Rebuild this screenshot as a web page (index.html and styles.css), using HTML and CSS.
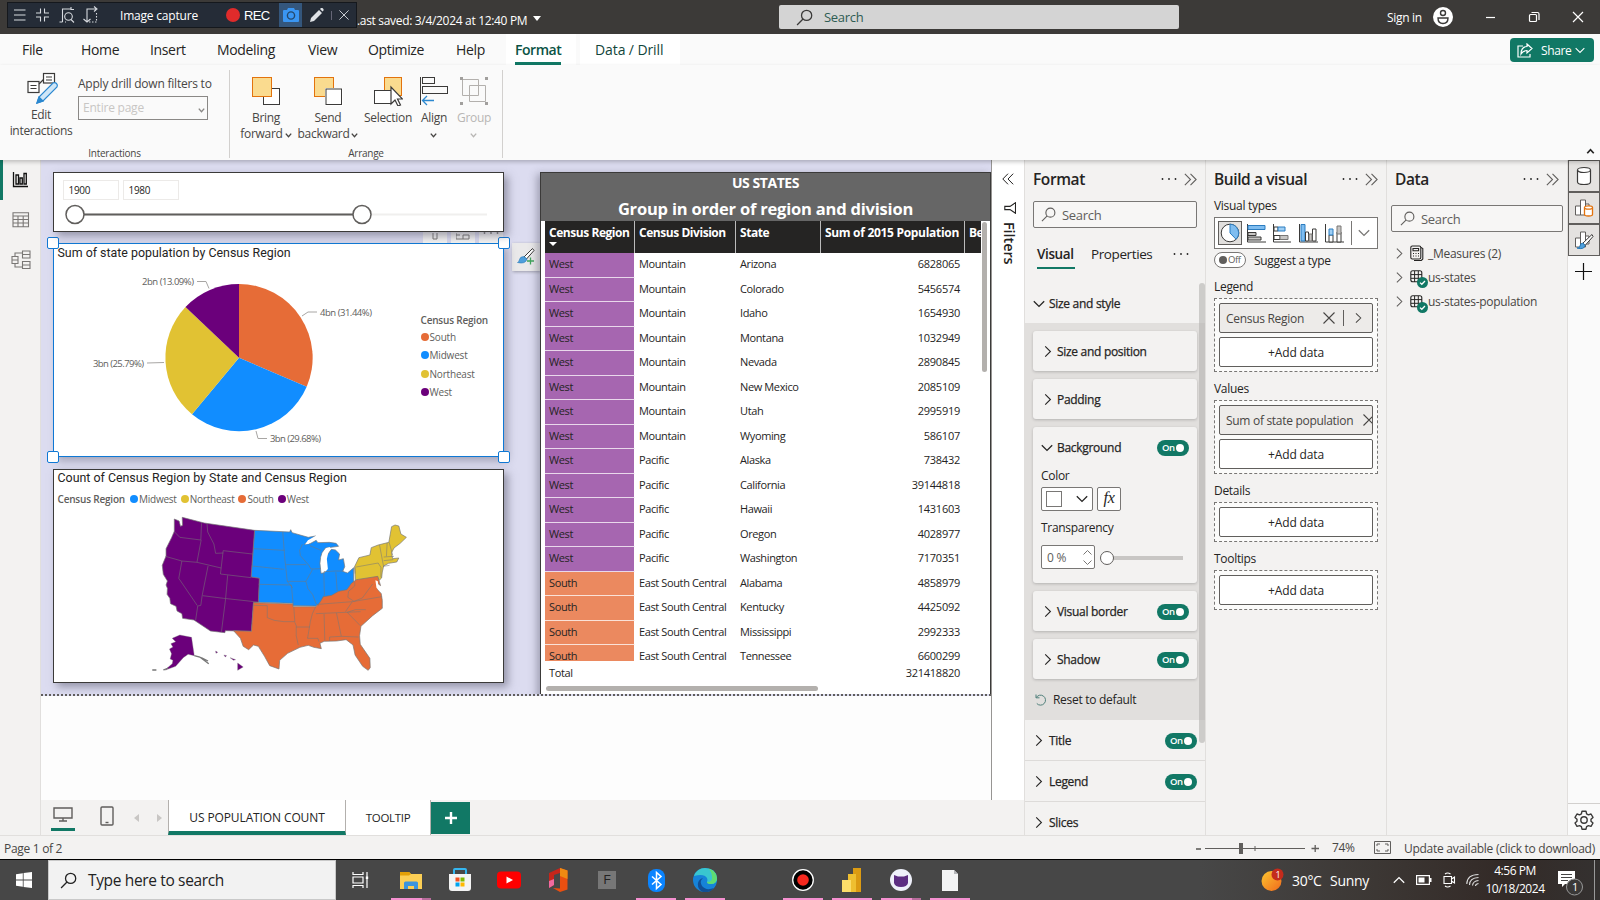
FILE: index.html
```html
<!DOCTYPE html>
<html lang="en">
<head>
<meta charset="utf-8">
<title>US Population Report</title>
<link rel="stylesheet" href="styles.css">
</head>
<body>
<svg class="defs" width="0" height="0">
  <defs>
    <symbol id="search" viewBox="0 0 16 16"><circle cx="10" cy="6" r="4.8" fill="none" stroke="currentColor" stroke-width="1.2"/><path d="M6.6 9.4 1 15" stroke="currentColor" stroke-width="1.2" fill="none"/></symbol>
    <symbol id="right" viewBox="0 0 8 14"><path d="M1 1.5 6.6 7 1 12.500" fill="none" stroke="currentColor" stroke-width="1.2"/></symbol>
    <symbol id="down" viewBox="0 0 12 8"><path d="M.8 1.200 6 6.400 11.200 1.200" fill="none" stroke="currentColor" stroke-width="1.3"/></symbol>
    <symbol id="sdown" viewBox="0 0 7 5"><path d="M.8.600 3.500 3.600 6.200.6" fill="none" stroke="currentColor" stroke-width="1.4"/></symbol>
    <symbol id="dbl" viewBox="0 0 12 12"><path d="M.8.7 6 6 .8 11.300M6 .7 11.200 6 6 11.300" fill="none" stroke="currentColor"/></symbol>
    <symbol id="dots" viewBox="0 0 16 4"><circle cx="1.500" cy="2" r=".9" fill="currentColor"/><circle cx="8" cy="2" r=".9" fill="currentColor"/><circle cx="14.500" cy="2" r=".9" fill="currentColor"/></symbol>
    <symbol id="cross" viewBox="0 0 12 12"><path d="M.5.5 11.500 11.500M11.500.5.5 11.500" stroke="currentColor" fill="none" stroke-width="1.1"/></symbol>
    <symbol id="table" viewBox="0 0 18 18"><rect x=".8" y=".8" width="11" height="11" rx="2" fill="none" stroke="#252423" stroke-width="1.1"/><path d="M4.600 1v11M8.300 1v11M1 4.600h11M1 8.300h11" stroke="#252423" stroke-width="1"/><circle cx="12.500" cy="12.500" r="5.500" fill="#117865"/><path d="m10 12.600 1.800 1.700 3.200-3.300" stroke="#fff" stroke-width="1.300" fill="none"/></symbol>
  </defs>
</svg>
<div class="app">
  <header class="titlebar">
    <div class="recorder">
      <svg width="90" height="24" viewBox="0 0 90 24" fill="none" stroke="#d8dbe0" stroke-width="1.100"><path d="M6 7h11.500M6 12h11.500M6 17h11.500"/><path d="M28 10h4.500V5.500M36.500 5.500V10H41M28 14h4.500v4.500M36.500 18.500V14H41"/><path d="M54.500 19V6h8M51.500 19h3M63 4v2.500h3M57 19h1"/><circle cx="60.500" cy="13.500" r="3.800"/><path d="M63 16.500l3 3"/><path d="M79 19V6h9M75.500 16l3.500 3 3.500-3M86 3.500 89 6l-3 2.500"/><path d="M88.500 10v9M81 19h8" stroke-dasharray="1.500 1.500"/></svg>
      <span class="rec-title">Image capture</span>
      <i class="rec-dot"></i><span class="rec-text">REC</span>
      <span class="rec-cam"><svg width="16" height="14" viewBox="0 0 16 14"><path d="M1 2h3l1-2h6l1 2h3q1 0 1 1v10q0 1-1 1H1q-1 0-1-1V3q0-1 1-1z" fill="#3a96f3"/><circle cx="8" cy="7.500" r="3.600" fill="none" stroke="#24486c" stroke-width="1.400"/></svg></span>
      <svg class="rec-pen" width="14" height="14" viewBox="0 0 14 14"><path d="M0 14l1-4 8-8 3 3-8 8zM10 1l1-1q1-.5 2 .5t.5 2l-1 1z" fill="#dfe2e6"/></svg>
      <i class="rec-sep"></i>
      <svg width="10" height="10" class="rec-x"><use href="#cross"/></svg>
    </div>
    <span class="saved">.ast saved: 3/4/2024 at 12:40 PM</span>
    <i class="caret"></i>
    <div class="topsearch"><svg width="17" height="17"><use href="#search"/></svg><span>Search</span></div>
    <span class="signin">Sign in</span>
    <svg class="avatar" width="20" height="20" viewBox="0 0 20 20"><circle cx="10" cy="10" r="10" fill="#fff"/><circle cx="10" cy="6" r="2.500" fill="none" stroke="#3b3a39" stroke-width="1.400"/><path d="M5 11h10q0 5.500-5 5.500T5 11z" fill="none" stroke="#3b3a39" stroke-width="1.400"/></svg>
    <svg class="winctl" width="100" height="12" viewBox="0 0 100 12" fill="none" stroke="#fff" stroke-width="1.200"><path d="M0 6.500h9"/><rect x="43.500" y="3.500" width="7" height="7" rx="1"/><path d="M45.500 1.500h6q1.500 0 1.500 1.500v6"/><path d="m87 1 10 10M97 1 87 11"/></svg>
  </header>

  <nav class="tabs">
    <span class="tab t1">File</span><span class="tab t2">Home</span><span class="tab t3">Insert</span><span class="tab t4">Modeling</span><span class="tab t5">View</span><span class="tab t6">Optimize</span><span class="tab t7">Help</span><span class="tab ctx active">Format</span><span class="tab ctx">Data / Drill</span>
    <span class="share"><svg width="16" height="15" viewBox="0 0 16 15" fill="none" stroke="#fff" stroke-width="1.200"><path d="M6 3H1v11h12v-3"/><path d="M10 1l5 4.500-5 4.500V7.500Q6 7.500 4 11q0-7 6-7.500z"/></svg><span>Share</span><svg width="10" height="7"><use href="#down"/></svg></span>
  </nav>

  <section class="ribbon">
    <div class="group interactions">
      <div class="gbody">
        <div class="cmd edit"><svg width="32" height="34" viewBox="0 0 32 34" fill="none" stroke="#3b3a39" stroke-width="1.200"><path d="M12 12l5-5"/><rect x="16.500" y="1.500" width="11" height="9.500" fill="#fff"/><path d="M19 5h6M19 8h6"/><rect x="1" y="9.500" width="11" height="11" fill="#fff"/><path d="M3.500 13.500h6M3.500 16.500h6"/><path d="M10 31l2-6L26 11q2-1 3.500.5T30 15L16 29z" fill="#cfe6f7" stroke="#2b88d0"/><path d="M10 31l2-6 4 4z" fill="#2b88d0" stroke="#2b88d0"/></svg><span>Edit<br>interactions</span></div>
        <div class="drill"><span>Apply drill down filters to</span><div class="select"><span>Entire page</span><svg width="7" height="5"><use href="#sdown"/></svg></div></div>
      </div>
      <div class="glabel">Interactions</div>
    </div>
    <div class="group arrange">
      <div class="gbody">
        <div class="cmd w60"><svg width="30" height="30" viewBox="0 0 30 30"><rect x="12.500" y="12.500" width="16" height="16" fill="#fff" stroke="#3b3a39"/><path d="M1 1h20v20H1z" fill="#fff"/><rect x="1.500" y="1.500" width="19" height="19" fill="#fadb8f" stroke="#e3730d"/></svg><span>Bring<br>forward<svg width="7" height="5"><use href="#sdown"/></svg></span></div>
        <div class="cmd w64"><svg width="30" height="30" viewBox="0 0 30 30"><rect x="1.500" y="1.500" width="19" height="19" fill="#fadb8f" stroke="#e3730d"/><rect x="12" y="12" width="18" height="18" fill="#fff"/><rect x="13" y="13" width="15.500" height="15.500" fill="#fff" stroke="#3b3a39"/></svg><span>Send<br>backward<svg width="7" height="5"><use href="#sdown"/></svg></span></div>
        <div class="cmd w56"><svg width="30" height="30" viewBox="0 0 30 30"><rect x="11.500" y="1.500" width="17" height="18" fill="#fadb8f" stroke="#e3730d"/><rect x="1.500" y="14.500" width="17" height="13" fill="#fff" stroke="#3b3a39"/><path d="M18 11v17l4-4 3 6 2.500-1-3-6h5z" fill="#fff" stroke="#3b3a39" stroke-width="1.200"/></svg><span>Selection</span></div>
        <div class="cmd w36"><svg width="30" height="30" viewBox="0 0 30 30" fill="none" stroke="#3b3a39"><path d="M1.500 1v28"/><rect x="3.500" y="1.500" width="12" height="6"/><rect x="3.500" y="10.500" width="25" height="7"/><path d="M15 24.500H4M8 20l-4.500 4.500L8 29" stroke="#2b88d0" stroke-width="1.300"/></svg><span>Align<br><svg class="solo" width="7" height="5"><use href="#sdown"/></svg></span></div>
        <div class="cmd w44 off"><svg width="30" height="30" viewBox="0 0 30 30" fill="none" stroke="#b3b0ad"><path d="M3.500 3.500h16v16h-16zM10.500 9.500h16v16h-16z"/><path d="M1 1h3v3H1zM26 1h3v3h-3zM1 26h3v3H1zM26 26h3v3h-3z" fill="#a19f9d" stroke="none"/></svg><span>Group<br><svg class="solo" width="7" height="5"><use href="#sdown"/></svg></span></div>
      </div>
      <div class="glabel">Arrange</div>
    </div>
    <svg class="collapse" width="9" height="6"><use href="#sdown"/></svg>
  </section>

  <main class="work">
    <aside class="views">
      <i class="mark"></i>
      <svg width="16" height="16" viewBox="0 0 16 16" fill="none" stroke="#111" stroke-width="1.300"><path d="M1.500 0v14.500H16M4 3h2.500v9H4zM8 6h2.300v6H8zM12 1.500h2.300V12H12z"/></svg>
      <svg width="18" height="16" viewBox="0 0 18 16" fill="none" stroke="#797775" stroke-width="1.100"><path d="M1 .7h15.500v14H1zM1 4h15.500M1 7.500h15.500M1 11h15.500M6 4v10.700M11.200 4v10.700"/></svg>
      <svg width="20" height="20" viewBox="0 0 20 20" fill="none" stroke="#797775" stroke-width="1.100"><path d="M1 6.500h6v7H1zM1 10h6M11.500 1H19v7h-7.500zM11.500 4.500H19M11.500 11.500H19v7h-7.500zM11.500 15H19M4 6.500V3h7.500M4 13.500V17h7.500"/></svg>
    </aside>

    <div class="canvas">
      <div class="page">
        <div class="leftcol">
          <section class="card slicer">
            <div class="years"><span>1900</span><span>1980</span></div>
            <svg width="440" height="22" viewBox="0 0 440 22"><path d="M20 10.500h413" stroke="#f0efee" stroke-width="2"/><path d="M20 10.500h287" stroke="#605e5c" stroke-width="2"/><circle cx="21" cy="10.500" r="9" fill="#fff" stroke="#605e5c" stroke-width="1.500"/><circle cx="308" cy="10.500" r="9" fill="#fff" stroke="#605e5c" stroke-width="1.500"/></svg>
          </section>
          <section class="card piecard">
            <div class="vtools"><span><svg width="10" height="8" viewBox="0 0 10 8"><path d="M3 0v6h4V0" fill="none" stroke="#797775"/></svg></span><span><svg width="14" height="8" viewBox="0 0 14 8"><path d="M0 0v6h13V2H7v4M0 2h4" fill="none" stroke="#797775"/></svg></span><span class="dim"><svg width="16" height="4"><use href="#dots"/></svg></span></div>
            <i class="h tl"></i><i class="h tr"></i><i class="h bl"></i><i class="h br"></i>
            <h3>Sum of state population by Census Region</h3>
            <div class="pierow">
            <svg class="pie" width="350" height="190" viewBox="54 262 350 190">
              <path d="M239 357.700V284a73.700 73.700 0 0 1 67.700 102.700z" fill="#e66c37"/>
              <path d="M239 357.700 306.700 386.700A73.700 73.700 0 0 1 192 414.300z" fill="#118dff"/>
              <path d="M239 357.700 192 414.300A73.700 73.700 0 0 1 185.500 307z" fill="#e1c233"/>
              <path d="M239 357.700 185.500 307A73.700 73.700 0 0 1 239 284z" fill="#6b007b"/>
              <g fill="none" stroke="#a8a6a4"><path d="M197 281.500h9l3 7M302 316l6-4h9M147 363l17-.5M256 431l2 7.500h9"/></g>
              <g class="plabel"><text x="142" y="284.500" textLength="52">2bn (13.09%)</text><text x="320" y="316" textLength="52">4bn (31.44%)</text><text x="93" y="366.500" textLength="51">3bn (25.79%)</text><text x="270" y="441.500" textLength="51">3bn (29.68%)</text></g>
            </svg>
            <ul class="legend col"><li class="lt">Census Region</li><li class="south">South</li><li class="mid">Midwest</li><li class="ne">Northeast</li><li class="west">West</li></ul>
            </div>
          </section>
          <section class="card mapcard">
            <h3>Count of Census Region by State and Census Region</h3>
            <ul class="legend row"><li class="lt">Census Region</li><li class="mid">Midwest</li><li class="ne">Northeast</li><li class="south">South</li><li class="west">West</li></ul>
            <svg class="map" width="268.600" height="160" viewBox="420 160 780 480" preserveAspectRatio="none">
              <g stroke="#777" stroke-width="2" stroke-linejoin="round">
                <path fill="#118dff" d="M741 212l102 5 3-7 4 9 47 14 21-4-32 25 16-2 18-10 5 7 33-1 20 3 7 9-38 5-10 14-4 14-2 18 3 30 10-2 4-28 2-22 14-20 12 2 12 12-3 18 14-4 4 24-6 14 14 5 18-16v49l-17 24-23 19-42 7L919 439 853 438 852 431 752 428 755 356 731 352z"/>
                <path fill="#6b007b" d="M508 178l14 6 4 16 6-3-1-24 64 17 146 22-10 140 24 4-3 72-14 1-6 86-76-2-1 6-42-5-48-33-33-5-2-14-14-8-3-14-16-8-2-16-8-12 1-18-4-10 4-12-12-20-3-27 11-28v-22l16-33 8-19z"/>
                <path fill="#e1c233" d="M1032 320l12-26 32-8 4-22 20-8 31-8 8-47 10-5 11 3 6 24 16 10-18 18-18 14-7 14 3 18 18-2-6 12-24 4-14 8-4 18-2 18-6 6-8-6-62 10z"/>
                <path fill="#e66c37" d="M738 429l114 4 1 8 66 0 10-10 12-20 24-4 20-12 24-5 14-20 14-10 62-10 8 28-10-8 2 20 10 12 3 20 0 24-28 22-34 32-4 28 2 26 28 42 1 28-6 8-16-12-22-34-6-30-20-16-28 4-36 1-12 6 4 16-22-4-16-6-24 6L837 581 814 602 812 628 785 618 770 590 752 560 738 556 724 570 708 560 700 536 680 513 732 515z"/>
              </g>
              <path fill="#fff" d="M937 285l12-20 12-3-5 12-5 24 3 30-8 9-10-8-2-20zM888 254l8-12 22-13 6 3-22 12-4 9zM1092 362l7 3 2 18 6 15-12-14z"/>
              <g fill="none" stroke="#777" stroke-width="1.600">
                <path d="M508 216l16 17 61 8 2-50M586 241l-12 66M482 290l48 14 44 4 70 17M530 304l-9 52 54 82M606 319l-17 88-4 30-9 2-6 42M603 192l2 25 18 36 5 28 22-1M650 273l-8 70 89 11M650 273l85 10M663 347l-6 69M590 408l62 8 98 11M657 417l-12 99"/>
                <path d="M738 267l90 5M734 319l92 10M753 374l95 2 5 56M823 217l6 82 2 16h60M831 315l5 50 54 0 10-18 10-18M836 365l16 20M880 254l-8 18 2 16 24 28 7 12 28-1M890 365l6 22 14 18 10 28 8 4M902 258l32 14M942 338l2 68-8 10M942 336l34-2 24 0M977 338l4 56M1032 320l1 22"/>
                <path d="M738 437l40 1v36l20 8 28 4 32 0-3-45M858 488l4 10v30l6 28M862 502l40 0M919 440l-10 22-6 24-8 50 30 0 3 10M919 462l130-6M925 434l100-8 86-15M943 463l2 80M979 460l14 70-34 2v12M993 530l50 2M1010 458l38 40M1010 458l24-8 30 0M1025 426l-20 30M1032 365l0 14-18 16-2 18 18 12 24-10 30-42"/>
                <path d="M1104 256l8 44 4 22M1116 292l30-2M1116 303l28-3M1126 250l-2 40M1132 248l10 38M1036 322l64-12 8 13v30M1115 320l18-3"/>
              </g>
              <g fill="#6b007b" stroke="#777"><path d="M502 536l22-10 34 7 8 55-18-4-14 10-22 26-32 12 22-20 2-10-8-4 4-16-6-14 10-6-6-10 14-6z"/><path fill="none" stroke-width="4" d="M490 625l-14 6M456 631h-12M566 588l16 4 26 20M586 594l20 10"/><path d="M628 574l6 4-5 3zM652 586l8 2-4 4zM670 594l16 6-6 2zM692 610l16 12-16 10z"/></g>
            </svg>
          </section>
        </div>
        <span class="painter"><svg width="18" height="18" viewBox="0 0 18 18"><path d="M15.500.5 7 9l2.500 2L17 2.500z" fill="#fff" stroke="#3b3a39"/><path d="M7 8.500q-4 0-4.500 3Q2 14 .5 14.500q8 2 9.500-3.500z" fill="#4e9fdc" stroke="#2779b8" stroke-width=".6"/><path d="M13.500 9.500v7M10 13h7" stroke="#3fa45b" stroke-width="1.300"/></svg></span>
        <section class="card tablecard">
          <div class="thead1"><b>US STATES</b><strong>Group in order of region and division</strong></div>
          <div class="tbody">
            <div class="r hd"><span>Census Region<i></i></span><span>Census Division</span><span>State</span><span>Sum of 2015 Population</span><span>Be</span></div>
            <div class="rows">
            <div class="r w"><span>West</span><span>Mountain</span><span>Arizona</span><span>6828065</span></div>
            <div class="r w"><span>West</span><span>Mountain</span><span>Colorado</span><span>5456574</span></div>
            <div class="r w"><span>West</span><span>Mountain</span><span>Idaho</span><span>1654930</span></div>
            <div class="r w"><span>West</span><span>Mountain</span><span>Montana</span><span>1032949</span></div>
            <div class="r w"><span>West</span><span>Mountain</span><span>Nevada</span><span>2890845</span></div>
            <div class="r w"><span>West</span><span>Mountain</span><span>New Mexico</span><span>2085109</span></div>
            <div class="r w"><span>West</span><span>Mountain</span><span>Utah</span><span>2995919</span></div>
            <div class="r w"><span>West</span><span>Mountain</span><span>Wyoming</span><span>586107</span></div>
            <div class="r w"><span>West</span><span>Pacific</span><span>Alaska</span><span>738432</span></div>
            <div class="r w"><span>West</span><span>Pacific</span><span>California</span><span>39144818</span></div>
            <div class="r w"><span>West</span><span>Pacific</span><span>Hawaii</span><span>1431603</span></div>
            <div class="r w"><span>West</span><span>Pacific</span><span>Oregon</span><span>4028977</span></div>
            <div class="r w"><span>West</span><span>Pacific</span><span>Washington</span><span>7170351</span></div>
            <div class="r s"><span>South</span><span>East South Central</span><span>Alabama</span><span>4858979</span></div>
            <div class="r s"><span>South</span><span>East South Central</span><span>Kentucky</span><span>4425092</span></div>
            <div class="r s"><span>South</span><span>East South Central</span><span>Mississippi</span><span>2992333</span></div>
            <div class="r s"><span>South</span><span>East South Central</span><span>Tennessee</span><span>6600299</span></div>
            </div>
            <div class="r total"><span>Total</span><span></span><span></span><span>321418820</span></div>
            <i class="vs"></i><i class="hs"></i>
          </div>
        </section>
      </div>
      <div class="pagebar">
        <span class="dev on"><svg width="20" height="15" viewBox="0 0 20 15" fill="none" stroke="#605e5c" stroke-width="1.400"><path d="M1 1h18v10H1zM6 14h8M10 11v3"/></svg></span>
        <span class="dev ph"><svg width="14" height="20" viewBox="0 0 14 20" fill="none" stroke="#605e5c" stroke-width="1.400"><rect x="1" y="1" width="12" height="18" rx="1"/><path d="M5.500 16.500h3"/></svg></span>
        <i class="ar l"></i><i class="ar rr"></i>
        <span class="ptab on">US POPULATION COUNT</span><span class="ptab tip">TOOLTIP</span><span class="addp"><svg width="12" height="12"><path d="M6 0v12M0 6h12" stroke="#fff" stroke-width="2.400"/></svg></span>
      </div>
    </div>

    <aside class="filters"><svg width="12" height="12" class="flip"><use href="#dbl"/></svg><svg width="12" height="12" viewBox="0 0 12 12"><path d="M11.500.7v10.600L6 7.600H.8V4.400H6z" fill="none" stroke="#252423" stroke-width="1.100"/></svg><span>Filters</span></aside>

    <aside class="pane format">
      <div class="ptitle"><b>Format</b><svg width="16" height="4"><use href="#dots"/></svg><svg width="13" height="13"><use href="#dbl"/></svg></div>
      <div class="psearch"><svg width="15" height="15"><use href="#search"/></svg><span>Search</span></div>
      <div class="ptabs"><span class="on">Visual</span><span>Properties</span><svg width="16" height="4"><use href="#dots"/></svg></div>
      <div class="sec first"><svg width="12" height="8"><use href="#down"/></svg><span>Size and style</span></div>
      <div class="block">
        <div class="acc"><svg width="8" height="13"><use href="#right"/></svg><span>Size and position</span></div>
        <div class="acc"><svg width="8" height="13"><use href="#right"/></svg><span>Padding</span></div>
        <div class="acc open">
          <div class="acch"><svg width="12" height="8"><use href="#down"/></svg><span>Background</span><em>On</em></div>
          <label>Color</label>
          <div class="frow"><span class="swatch"><i></i><svg width="12" height="8"><use href="#down"/></svg></span><span class="fx">fx</span></div>
          <label class="tr">Transparency</label>
          <div class="frow"><span class="num">0 %<svg width="9" height="15" viewBox="0 0 9 15"><path d="m.5 4.500 4-4 4 4m-8 6 4 4 4-4" fill="none" stroke="#797775"/></svg></span><span class="slide"><i></i></span></div>
        </div>
        <div class="acc"><svg width="8" height="13"><use href="#right"/></svg><span>Visual border</span><em>On</em></div>
        <div class="acc"><svg width="8" height="13"><use href="#right"/></svg><span>Shadow</span><em>On</em></div>
        <div class="reset"><svg width="12" height="12" viewBox="0 0 12 12"><path d="M1 .5v3.300h3.500M1.200 3.600A5 5 0 1 1 1.800 9.500" fill="none" stroke="#4f7f7a"/></svg><span>Reset to default</span></div>
      </div>
      <div class="sec"><svg width="8" height="13"><use href="#right"/></svg><span>Title</span><em>On</em></div>
      <div class="sec"><svg width="8" height="13"><use href="#right"/></svg><span>Legend</span><em>On</em></div>
      <div class="sec"><svg width="8" height="13"><use href="#right"/></svg><span>Slices</span></div>
      <i class="pscroll"></i>
    </aside>

    <aside class="pane build">
      <div class="ptitle"><b>Build a visual</b><svg width="16" height="4"><use href="#dots"/></svg><svg width="13" height="13"><use href="#dbl"/></svg></div>
      <label>Visual types</label>
      <div class="types">
        <span class="pick"><svg width="20" height="20" viewBox="0 0 20 20"><circle cx="10" cy="10" r="8.800" fill="#fff" stroke="#3b3a39"/><path d="M10 10V1.200a8.800 8.800 0 0 1 6 15z" fill="#7fbdf0" stroke="#2b7cc0"/></svg></span>
        <svg width="20" height="20" viewBox="0 0 20 20"><path d="M1.500 1v18H20" stroke="#3b3a39" fill="none"/><path d="M2 2.500h17v4H2z" fill="#7fbdf0" stroke="#2b7cc0"/><path d="M2 9.500h8v3H2zM2 14h13v3H2z" fill="#c8c6c4" stroke="#3b3a39"/></svg>
        <svg width="20" height="20" viewBox="0 0 20 20"><path d="M1.500 1v18H19" stroke="#3b3a39" fill="none"/><path d="M2 4h4v4H2zM2 12.500h6v4H2z" fill="#fff" stroke="#3b3a39"/><path d="M6 4h7v4H6z" fill="#9fcff5" stroke="#2b7cc0"/><path d="M8 12.500h8v4H8z" fill="#c8c6c4" stroke="#797775"/></svg>
        <svg width="20" height="20" viewBox="0 0 20 20"><path d="M1.500 1v18H20" stroke="#3b3a39" fill="none"/><path d="M3 1.500h4V18H3z" fill="#7fbdf0" stroke="#2b7cc0"/><path d="M7.500 9h3v9h-3zM14.500 6h3.500v12h-3.500z" fill="#fff" stroke="#3b3a39"/><path d="M11 11h3v7h-3z" fill="#c8c6c4" stroke="#797775"/></svg>
        <svg width="20" height="20" viewBox="0 0 20 20"><path d="M1.500 1v18H20" stroke="#3b3a39" fill="none"/><path d="M5 12h4v7H5zM13 9h4v10h-4z" fill="#fff" stroke="#3b3a39"/><path d="M5 6h4v6H5z" fill="#9fcff5" stroke="#2b7cc0"/><path d="M13 3h4v8h-4z" fill="#c8c6c4" stroke="#797775"/></svg>
        <i></i><svg class="more" width="12" height="8"><use href="#down"/></svg>
      </div>
      <div class="suggest"><em class="no">Off</em><span>Suggest a type</span></div>
      <label class="l2">Legend</label>
      <div class="well"><div class="fld"><span>Census Region</span><svg width="12" height="12"><use href="#cross"/></svg><i></i><svg width="7" height="12"><use href="#right"/></svg></div><div class="add">+Add data</div></div>
      <label class="l3">Values</label>
      <div class="well"><div class="fld clip"><span>Sum of state population</span><svg width="12" height="12"><use href="#cross"/></svg></div><div class="add">+Add data</div></div>
      <label class="l3">Details</label>
      <div class="well"><div class="add">+Add data</div></div>
      <label class="l3">Tooltips</label>
      <div class="well"><div class="add">+Add data</div></div>
    </aside>

    <aside class="pane data">
      <div class="ptitle"><b>Data</b><svg width="16" height="4"><use href="#dots"/></svg><svg width="13" height="13"><use href="#dbl"/></svg></div>
      <div class="psearch"><svg width="15" height="15"><use href="#search"/></svg><span>Search</span></div>
      <div class="node"><svg width="7" height="13"><use href="#right"/></svg><svg width="18" height="18" viewBox="0 0 18 18" fill="none" stroke="#252423" stroke-width="1.100"><rect x=".8" y="2" width="10" height="13" rx="1.500"/><path d="M3 4.500h5.600v2.300H3zM3 9.500h1M5.500 9.500h1M8 9.500h1M3 12h1M5.500 12h1M8 12h1M11 3.500l1.800 1V15l-1.500 1.500H4"/></svg><span>_Measures (2)</span></div>
      <div class="node"><svg width="7" height="13"><use href="#right"/></svg><svg width="18" height="18" class="tb"><use href="#table"/></svg><span>us-states</span></div>
      <div class="node"><svg width="7" height="13"><use href="#right"/></svg><svg width="18" height="18" class="tb"><use href="#table"/></svg><span>us-states-population</span></div>
    </aside>

    <aside class="rail">
      <span><svg width="16" height="20" viewBox="0 0 16 20" fill="#fff" stroke="#3b3a39" stroke-width="1.200"><path d="M1.500 4v12q0 2.500 6.500 2.500t6.500-2.500V4"/><ellipse cx="8" cy="4" rx="6.500" ry="2.500"/></svg></span>
      <span><svg width="20" height="20" viewBox="0 0 20 20" fill="#fff" stroke="#605e5c"><path d="M1.500 8h5v9h-5zM6.500 2h5v15h-5zM11.500 6H15v4"/><path d="M10.500 9.500v7q0 1.500 4 1.500t4-1.500v-7" stroke="#e3730d" stroke-width="1.300"/><ellipse cx="14.500" cy="9.500" rx="4" ry="1.700" stroke="#e3730d" stroke-width="1.300"/></svg></span>
      <span><svg width="20" height="20" viewBox="0 0 20 20" fill="#fff" stroke="#605e5c"><path d="M1.500 8h5v9h-5zM6.500 2h5v15h-5zM11.500 6H15v8h-3.500z"/><path d="M18 4.500 9 13l2 2.500 8-9z" stroke="#3b3a39"/><path d="M8.800 13Q6 13.500 6 16t-3 2q7 2 8-2.500z" fill="#4e9fdc" stroke="#2779b8"/></svg></span>
      <svg class="plus" width="17" height="17"><path d="M8.500 0v17M0 8.500h17" stroke="#111" stroke-width="1.200"/></svg>
      <div class="gear"><svg width="20" height="20" viewBox="0 0 20 20" fill="none" stroke="#3b3a39" stroke-width="1.400"><circle cx="10" cy="10" r="3.200"/><path d="M8 1.200h4l.6 2.600 1.800 1 2.600-.8 2 3.400-2 1.800v2l2 1.800-2 3.400-2.600-.8-1.800 1-.6 2.600H8l-.6-2.600-1.800-1-2.600.8L1 13l2-1.800v-2L1 7.400 3 4l2.600.8 1.800-1z" stroke-linejoin="round"/></svg></div>
    </aside>
  </main>

  <footer class="status">
    <span class="pg">Page 1 of 2</span>
    <svg class="zoom" width="125" height="14" viewBox="0 0 125 14" fill="none" stroke="#605e5c"><path d="M0 8h5" stroke-width="1.600"/><path d="M9 7.500h100M59 5v5"/><path d="M43 2h4v11h-4z" fill="#605e5c" stroke="none"/><path d="M115.500 7.500h7.500M119.200 4v7" stroke-width="1.300"/></svg>
    <span class="pct">74%</span>
    <svg class="fit" width="17" height="13" viewBox="0 0 17 13" fill="none" stroke="#605e5c"><path d="M.5.500h16v12H.5zM3 5V3h3M11 3h3v2M14 8v2h-3M6 10H3V8"/></svg>
    <span class="upd">Update available (click to download)</span>
  </footer>

  <div class="taskbar">
    <span class="start"><svg width="16" height="16" viewBox="0 0 16 16" fill="#fff"><path d="M0 2.200 6.800 1.200v6.400H0zM7.600 1.100 16 0v7.600H7.600zM0 8.400h6.800v6.400L0 13.800zM7.600 8.400H16V16l-8.400-1.100z"/></svg></span>
    <div class="tsearch"><svg width="17" height="17"><use href="#search"/></svg><span>Type here to search</span></div>
    <div class="apps">
      <span class="tv"><svg width="17" height="16" viewBox="0 0 17 16" fill="none" stroke="#fff" stroke-width="1.200"><path d="M1 0v2.500h10V0M1 16v-2.500h10V16M1 5h10v6H1zM15 0v16"/><path d="M13.800 4.500h2.400v2.500h-2.400z" fill="#fff" stroke="none"/></svg></span>
      <span class="run multi"><svg width="22" height="19" viewBox="0 0 22 19"><path d="M0 1h9l2 2h11v15H0z" fill="#fccf55"/><path d="M0 1h9l2 2-2 1.500H0z" fill="#e3a008"/><path d="M4 18v-6q0-1.500 1.500-1.500h11Q18 10.500 18 12v6h-4v-3H8v3z" fill="#3b94dd"/></svg></span>
      <span><svg width="24" height="24" viewBox="0 0 24 24"><path d="M6 7V2q0-1 1-1h10q1 0 1 1v5" fill="none" stroke="#35b6f0" stroke-width="2"/><path d="M1 6h22v14q0 3-3 3H4q-3 0-3-3z" fill="#f4f4f4"/><path d="M7.500 9.500h4v4h-4z" fill="#f25022"/><path d="M12.500 9.500h4v4h-4z" fill="#7fba00"/><path d="M7.500 14.500h4v4h-4z" fill="#00a4ef"/><path d="M12.500 14.500h4v4h-4z" fill="#ffb900"/></svg></span>
      <span><svg width="24" height="18" viewBox="0 0 24 18"><rect y=".5" width="24" height="17" rx="4" fill="#f00"/><path d="M9.500 5.500 16 9l-6.500 3.500z" fill="#fff"/></svg></span>
      <span><svg width="19" height="24" viewBox="0 0 19 24"><path d="M0 5 11 0v5L5 7v10l-5 3z" fill="#c5251a"/><path d="M11 0l7.500 2.500v19L11 24l-7-4 7 .5z" fill="#ea4f10"/><path d="M11 0l7.500 2.500V11L11 8z" fill="#f08a12"/><path d="M0 13l5-2v6l-5 3z" fill="#f06aa0"/></svg></span>
      <span><i class="fbox">F</i></span>
      <span class="run"><svg width="17" height="23" viewBox="0 0 17 23"><rect width="17" height="23" rx="8" fill="#0a84ff"/><path d="M4 7.500l9 8-4.500 4v-16l4.500 4-9 8" fill="none" stroke="#fff" stroke-width="1.500"/></svg></span>
      <span class="run"><svg width="24" height="24" viewBox="0 0 24 24"><circle cx="12" cy="12" r="12" fill="#1683d8"/><path d="M1 8Q4 0 12 0q11 0 12 10 0 6-6 6-4 0-4-2.500 1-1.500 0-3.500-3-5-13-2z" fill="#39c6cf"/><path d="M15 .5Q24 3 24 11q-1 5-6 5-4 0-4-2 6 0 5-6t-4-7.500z" fill="#5fdc72"/><path d="M10 10q-4 3-1 8 4 5 12 2-4 5-11 4-6-3-5-9 1-4 5-5z" fill="#114f95"/></svg></span>
      <span></span>
      <span class="run"><svg width="22" height="22" viewBox="0 0 22 22"><circle cx="11" cy="11" r="10.300" fill="#000" stroke="#fff" stroke-width="1.300"/><circle cx="11" cy="11" r="5.800" fill="#f6281e"/></svg></span>
      <span class="run"><svg width="20" height="24" viewBox="0 0 20 24"><path d="M11 0h8v24h-8z" fill="#dc9b12"/><path d="M6 6h8v18H6z" fill="#efbf30"/><path d="M0 12h9v12H0z" fill="#fbdd6a"/></svg></span>
      <span class="run multi"><svg width="22" height="22" viewBox="0 0 22 22"><circle cx="11" cy="11" r="11" fill="#eef0fa"/><path d="M4 6l4 1.500h6L18 6v8q-1 4-7 4t-7-4z" fill="#5c2d82"/></svg></span>
      <span class="run"><svg width="16" height="21" viewBox="0 0 16 21"><path d="M0 0h12l4 4v17H0z" fill="#f3f4f5"/><path d="M12 0v4h4z" fill="#b5b7ba"/></svg></span>
    </div>
    <div class="tray">
      <svg class="sun" width="24" height="24" viewBox="0 0 24 24"><defs><linearGradient id="sg" x1="0" y1="0" x2="1" y2="1"><stop offset="0" stop-color="#fdc62f"/><stop offset="1" stop-color="#f0691d"/></linearGradient></defs><circle cx="10.500" cy="13" r="10" fill="url(#sg)"/><circle cx="16.500" cy="6.500" r="6" fill="#c42b1c"/><text x="14.500" y="10" class="badge">1</text></svg>
      <span class="temp">30°C</span><span class="sunny">Sunny</span>
      <svg width="12" height="8" class="up"><use href="#down"/></svg>
      <svg class="bat" width="16" height="10" viewBox="0 0 16 10"><path d="M.600.600h12.800v8.800H.6z" fill="none" stroke="#fff" stroke-width="1.200"/><path d="M2.500 2.500h6v5h-6zM14 3h1.500v4H14z" fill="#fff"/></svg>
      <svg class="cam" width="13" height="16" viewBox="0 0 13 16" fill="none" stroke="#fff" stroke-width="1.100"><path d="M1 4.500h7.500v7H1zM8.500 7l3-2v6l-3-2M2 2q2.500-2 5.500 0M2 14q2.500 2 5.500 0"/></svg>
      <svg class="wifi" width="14" height="14" viewBox="0 0 14 14" fill="none" stroke="#ddd" stroke-width="1.100"><path d="M.8 11Q1 1.500 12.500 1.500M3.500 12Q3.500 5 12.500 4.500M6.500 12.500Q7 8 12.500 7.500M9.500 13q0-2 3-2.500"/></svg>
      <div class="clock"><span>4:56 PM</span><span>10/18/2024</span></div>
      <svg class="note" width="26" height="26" viewBox="0 0 26 26"><path d="M0 1h17v13H7l-3 3v-3H0z" fill="#fff"/><path d="M3 4.500h11M3 7.500h11M3 10.500h7" stroke="#444"/><circle cx="16.500" cy="17" r="8" fill="#3a3837" stroke="#999"/><text x="14" y="21" class="nb">1</text></svg>
      <i class="edge"></i>
    </div>
  </div>
</div>
</body>
</html>
```
FILE: styles.css
```css
*{box-sizing:border-box;margin:0;padding:0}
body{width:1600px;height:900px;overflow:hidden;font-family:"Open Sans","Noto Sans",sans-serif;font-size:12px;color:#252423;letter-spacing:-.3px}
svg{display:block;flex:none}
i,em{font-style:normal;display:block;flex:none}
.defs{position:absolute}
span{white-space:nowrap}
.app{display:flex;flex-direction:column;width:1600px;height:900px}

.titlebar{height:34px;flex:none;background:#3c3a38;color:#fff;display:flex;align-items:center}
.recorder{align-self:flex-start;margin:2px 0 0 7px;width:350px;height:26px;background:#252c37;border:1px solid #15181d;display:flex;align-items:center;flex:none}
.recorder>svg:first-child{overflow:visible}
.rec-title{margin-left:22px;width:78px;font-size:12px;letter-spacing:-.2px}
.rec-dot{width:14px;height:14px;border-radius:50%;background:#e02b2b;margin-left:28px}
.rec-text{font-family:"Liberation Sans",sans-serif;font-size:13px;margin-left:4px;width:26px;letter-spacing:-.7px}
.rec-cam{width:23px;height:24px;background:#34567c;margin-left:9px;display:flex;align-items:center;justify-content:center}
.rec-pen{margin-left:8px}
.rec-sep{width:1px;height:9px;background:#667;margin-left:7px}
.rec-x{margin-left:7px;color:#d8dbe0}
.saved{font-size:12px;margin:7px 0 0 0;width:171px;letter-spacing:-.32px}
.caret{border:4.5px solid transparent;border-top:5px solid #fff;border-bottom:0;margin:2px 0 0 5px}
.topsearch{margin-left:238px;width:400px;height:24px;background:#d4d4d4;border-radius:2px;display:flex;align-items:center;color:#3b3a39;flex:none}
.topsearch svg{margin-left:17px}
.topsearch span{margin-left:11px;color:#2e5c53;font-size:13px}
.signin{margin-left:208px;width:37px;font-size:12px}
.avatar{margin-left:9px}
.winctl{margin-left:33px}

.tabs{height:31px;flex:none;background:#fafafa;display:flex;align-items:stretch;font-size:14px;letter-spacing:-.35px}
.tab{line-height:32px;flex:none}
.t1{width:59px;margin-left:22px}.t2{width:69px}.t3{width:67px}.t4{width:91px}.t5{width:60px}.t6{width:88px}.t7{width:50px}
.ctx{background:#fff;color:#12453b;margin-right:4px;padding:0 15px;letter-spacing:-.1px}
.ctx.active{font-weight:600;padding:0 9px;margin-left:0;width:70px;color:#0b5345;letter-spacing:-.45px;background:linear-gradient(#117865,#117865) 9px 28px/46px 3px no-repeat #fff}
.ctx+.ctx{width:100px}
.share{margin:4px 6px 0 auto;width:84px;height:24px;background:#117865;border-radius:4px;color:#fff;display:flex;align-items:center;font-size:12px;padding-left:7px;gap:8px;font-weight:500}
.share span+svg{margin-left:-5px}

.ribbon{height:95px;flex:none;background:#fafafa;display:flex;box-shadow:0 2px 4px rgba(0,0,0,.22);z-index:2;position:relative}
.group{border-right:1px solid #d2d0ce;height:88px;margin-top:5px;display:flex;flex-direction:column;color:#484644}
.gbody{display:flex;height:76px;flex:none}
.interactions{width:230px}
.arrange{width:273px}
.arrange .gbody{padding-left:6px}
.glabel{text-align:center;font-size:10px;line-height:12px;height:12px;letter-spacing:-.25px;margin-top:1px}
.cmd{display:flex;flex-direction:column;align-items:center;text-align:center;font-size:12px;line-height:16px;padding-top:6px;flex:none}
.cmd>svg{margin-bottom:4px}
.cmd span svg{display:inline-block;vertical-align:0;margin-left:2px}
.cmd span svg.solo{margin-left:-1px}
.edit{width:78px;padding-left:4px;padding-top:2px}
.edit>svg{margin:0 0 1px 3px}
.w60{width:60px}.w64{width:64px}.w56{width:56px}.w36{width:36px}.w44{width:44px}
.off{color:#b8b6b4}
.drill{padding-top:4px;font-size:12px;line-height:20px;letter-spacing:-.22px}
.select{width:130px;height:24px;border:1px solid #8a8886;margin-top:2px;padding:0 2px 0 4px;display:flex;align-items:center;justify-content:space-between;color:#c8c6c4}
.select svg{color:#8a8886;margin-top:4px}
.collapse{position:absolute;right:5px;bottom:6px;transform:rotate(180deg)}

.work{height:676px;flex:none;display:flex;overflow:hidden}
.views{width:41px;flex:none;background:#f3f2f1;border-right:1px solid #e1dfdd;border-bottom:1px solid #e1dfdd;display:flex;flex-direction:column;align-items:center;position:relative}
.mark{position:absolute;left:0;top:0;width:3px;height:40px;background:#117865}
.views svg:nth-of-type(1){margin-top:12px}
.views svg:nth-of-type(2){margin-top:24px;margin-left:1px}
.views svg:nth-of-type(3){margin-top:22px;margin-left:1px}
.canvas{width:950px;flex:none;background:#fdfdfd;display:flex;flex-direction:column;border-right:0}
.page{height:536px;background:#dcdcf0;display:flex;padding:12px 0 0 12px;border-bottom:2px dotted #605e5c;overflow:hidden;flex:none}
.leftcol{width:451px;flex:none;display:flex;flex-direction:column}
.card{background:#fff;border:1px solid #3b3a39;position:relative;flex:none;box-shadow:4px 4px 8px rgba(80,80,100,.5)}
.slicer{height:60px}
.years{display:flex;gap:4px;padding:7px 0 0 9px}
.years span{width:56px;height:20px;border:1px solid #eceae8;font-size:10px;line-height:18px;padding-left:4.500px}
.slicer svg{margin-top:3.500px}
.slicer{z-index:2}
.piecard{height:214px;margin-top:11px;border:1px solid #0f78d4;box-shadow:4px 4px 8px rgba(80,80,100,.4)}
.h{position:absolute;width:12px;height:12px;background:#fff;border:1px solid #0f78d4;border-radius:2px}
.tl{left:-7px;top:-7px}.tr{right:-7px;top:-7px}.bl{left:-7px;bottom:-7px}.br{right:-7px;bottom:-7px}
.vtools{position:absolute;top:-13px;right:0;display:flex;gap:4px}
.vtools span{width:24px;height:12px;background:#f3f2f1;display:flex;justify-content:center;padding-top:2px}
.vtools .dim{padding-top:0;color:#797775}
h3{font:400 12.4px/17px Roboto,sans-serif;height:17px;padding-left:3.500px;letter-spacing:0;color:#252423;white-space:nowrap}
.mapcard h3{line-height:16px}
.pierow{display:flex}
.plabel{font-size:9.5px;fill:#605e5c;letter-spacing:0}
.legend{list-style:none;font-size:10px;color:#605e5c;letter-spacing:-.18px}
.legend li{display:flex;align-items:center;white-space:nowrap}
.legend li:not(.lt)::before{content:"";width:8px;height:8px;border-radius:50%;background:var(--c);margin-right:1px}
.south{--c:#e66c37}.mid{--c:#118dff}.ne{--c:#e1c233}.west{--c:#6b007b}
.lt{font-weight:600;letter-spacing:-.2px}
.pie{margin-top:1px}
.col{padding-top:50.500px;margin-left:16.500px}
.col li{height:18.500px}
.col .lt{height:16px}
.row{display:flex;gap:4px;padding-left:3.500px;height:24px;letter-spacing:-.23px}
.row .lt{margin-right:1px}
.mapcard{height:214px;margin-top:12px}
.map{margin:2px 0 0 90px}
.painter{width:28px;height:28px;background:#eae9ea;margin:71px 0 0 8px;display:flex;align-items:center;justify-content:center;flex:none;box-shadow:1px 1px 3px rgba(0,0,0,.3)}
.tablecard{width:451px;height:530px;margin-left:0;box-shadow:-3px 2px 8px rgba(80,80,100,.45)}
.thead1{height:48px;background:#666;color:#fff;display:flex;flex-direction:column;align-items:center}
.thead1 b{font-size:14px;line-height:20px;height:22px;flex:none;letter-spacing:-.45px;font-weight:700}
.thead1 strong{font-size:16.500px;line-height:28px;flex:none;letter-spacing:-.2px;font-weight:700}
.tbody{padding-left:4px;height:474px;position:relative}
.r{display:grid;grid-template-columns:90px 101px 85px 144px 16px;height:24.500px;font-size:11px;line-height:22.500px;letter-spacing:-.38px}
.r span{padding-left:4px;overflow:hidden}
.r span:nth-child(4){text-align:right;padding-right:5px;padding-left:0;letter-spacing:-.25px}
.hd{height:32px;width:436px;background:#252423;color:#fff;font-weight:700;font-size:12px;letter-spacing:-.45px;line-height:24px}
.hd span{border-right:1px solid #bbb;position:relative}
.hd span:nth-child(4){letter-spacing:-.3px}
.hd span:last-child{border:0}
.hd i{position:absolute;left:4px;top:21px;border:4px solid transparent;border-top-color:#fff;border-bottom:0}
.rows{height:408px;overflow:hidden}
.rows .r span:first-child{border-bottom:1px solid rgba(255,255,255,.75);border-right:1px solid #fff}
.w span:first-child{background:#a666b0}
.s span:first-child{background:#eb895f}
.total{line-height:24.500px}
.vs{position:absolute;left:441px;top:1px;width:5px;height:150px;background:#b3b0ad;border-radius:3px}
.hs{position:absolute;left:5px;top:465px;width:272px;height:5px;background:#b3b0ad;border-radius:3px}
.pagebar{margin-top:104px;height:36px;background:#f3f2f1;display:flex;width:983px;border-bottom:1px solid #e1dfdd;position:relative;z-index:1}
.dev{height:31px;display:flex;justify-content:center;align-items:center}
.dev.on{margin-left:10px;width:24px;border-bottom:3px solid #117865}
.ph{margin-left:24px;width:16px}
.ar{border:4px solid transparent;margin-top:14px;height:8px}
.l{border-right:5px solid #c8c6c4;margin-left:15px}
.rr{border-left:5px solid #c8c6c4;margin-left:18px}
.ptab{font-size:12px;text-align:center;line-height:35px;background:#fff;border-right:1px solid #b3b0ad}
.ptab.on{margin-left:2px;width:178px;border-left:1px solid #b3b0ad;border-bottom:4px solid #117865;letter-spacing:-.12px}
.tip{width:85px;font-size:11.500px}
.addp{width:39px;height:32px;margin-top:2px;background:#117865;display:flex;align-items:center;justify-content:center}

.filters{width:33px;height:640px;flex:none;background:#fff;border-left:1px solid #979593;display:flex;flex-direction:column;align-items:center}
.flip{transform:rotate(180deg);margin-top:13px}
.filters svg+svg{margin:17px 0 0 4px}
.filters span{writing-mode:vertical-rl;font-size:14.500px;margin:8px 0 0 2px;font-weight:600;letter-spacing:-.1px;line-height:20px}
.pane{background:#f3f2f1;border-left:1px solid #e1dfdd;height:676px;flex:none;border-bottom:1px solid #e1dfdd;overflow:hidden;position:relative}
.format{width:181px;border-right:0}
.build{width:181px;padding-left:8px}
.data{width:181px}
.ptitle{display:flex;align-items:center;height:38px;padding:0 8px;font-size:15.500px}
.ptitle b{font-weight:600;flex:1;letter-spacing:-.4px;white-space:nowrap}
.ptitle svg+svg{margin-left:7px;color:#605e5c}
.build .ptitle{padding-left:0;letter-spacing:-.3px}
.psearch{margin:3px 8px 0 8px;height:27px;border:1px solid #797775;border-radius:2px;background:#f7f6f5;display:flex;align-items:center;padding-left:7px;font-size:13px;color:#605e5c;gap:6px}
.ptabs{display:flex;height:41px;margin-left:12px;font-size:13.500px;line-height:34px;margin-top:9px;align-items:flex-start;letter-spacing:-.4px}
.ptabs span{margin-right:16px}
.ptabs .on{width:38px;height:32px;border-bottom:2px solid #117865;font-weight:600}
.ptabs svg{margin:15px 0 0 5px}
.sec{height:41px;display:flex;align-items:center;border-bottom:1px solid #dddbd9;padding:1px 8px 0 10px;font-size:12px;gap:6px}
.sec.first{border:0;padding:2px 0 0 8px;gap:4px;margin-top:4px;height:41px}
.sec span,.acc>span,.acch span{-webkit-text-stroke:.25px #252423}
.acc>span,.sec>span{white-space:nowrap}
.open .frow span{-webkit-text-stroke:0}
.sec em,.acc em{margin-left:auto}
em{width:32px;height:16px;border-radius:8px;background:#117865;color:#fff;font-size:9.500px;line-height:16px;padding-left:5px;letter-spacing:-.4px;font-weight:600;position:relative}
em::after{content:"";position:absolute;right:5px;top:4px;width:8px;height:8px;border-radius:50%;background:#fff}
.block{background:#e1dfdd;height:397px;padding:8px 8px 0;display:flex;flex-direction:column;gap:8px}
.acc{background:#f3f2f1;border-radius:3px;height:40px;display:flex;align-items:center;padding:1px 8px 0 11px;box-shadow:0 1px 3px rgba(0,0,0,.2);flex:none;gap:5px;width:164px}
.acc.open{height:156px;display:block;padding:0 8px}
.acch{height:40px;display:flex;align-items:center;gap:4px;padding-top:1px}
label{font-size:12px;display:block;line-height:18px;font-weight:400}
.frow{display:flex;gap:4px;height:24px}
.swatch{width:52px;height:24px;border:1px solid #797775;border-radius:2px;background:#fff;display:flex;align-items:center;justify-content:space-between;padding:0 4px}
.swatch i{width:16px;height:16px;border:1px solid #797775}
.fx{width:24px;border:1px solid #797775;background:#fff;border-radius:2px;font:italic 16px/20px "Liberation Serif",serif;text-align:center}
.open label{line-height:18px;height:20px;font-weight:400}
.open label.tr{position:static;margin-top:8px;height:26px}
.num{width:54px;border:1px solid #797775;border-radius:2px;background:#fff;color:#605e5c;padding:0 2px 0 5px;display:flex;justify-content:space-between;align-items:center}
.slide{width:84px;background:linear-gradient(#c8c6c4,#c8c6c4) 10px 11px/74px 4px no-repeat}
.slide i{width:14px;height:14px;border:1.500px solid #605e5c;border-radius:50%;background:#fff;margin:6px 0 0 1px}
.reset{display:flex;gap:6px;align-items:center;padding-left:2px;margin-top:4px}
.pscroll{position:absolute;right:0;top:123px;width:6px;height:460px;background:rgba(180,178,176,.6);border-radius:3px}

.types{width:164px;height:32px;border:1px solid #797775;background:#fff;display:flex;align-items:center;margin-top:2px;padding-left:3px;gap:6px}
.pick{width:24px;height:24px;background:#e1dfdd;border:1px solid #605e5c;display:flex;align-items:center;justify-content:center;margin-right:-2px}
.types i{width:1px;height:24px;background:#797775;margin-left:1px}
.more{color:#797775}
.suggest{display:flex;align-items:center;gap:8px;height:22px;margin-top:0;font-size:12px}
em.no{background:#fff;border:1px solid #797775;color:#605e5c;font-weight:400;line-height:14px;padding-left:13px;margin-top:-1px}
em.no::after{left:4px;top:3px;background:#605e5c}
.build>label{height:18px;line-height:18px;margin-top:-1px}
.build>label.l2{margin-top:6px;height:21px;line-height:20px}
.build>label.l3{margin-top:7px;height:21px;line-height:20px}
.well{width:164px;border:1px dashed #797775;background:#fbfbfa;padding:4px;display:flex;flex-direction:column;gap:4px}
.fld,.add{height:30px;border:1px solid #605e5c;border-radius:2px;display:flex;align-items:center;font-size:12px}
.add{background:#fff;justify-content:center;letter-spacing:-.15px}
.fld{background:#edebe9;padding:0 10px 0 6px;color:#484644;overflow:hidden}
.fld span{flex:1}
.fld i{width:1px;height:16px;background:#605e5c;margin:0 11px 0 8px}
.clip{padding-right:0;justify-content:space-between}
.clip svg{margin-right:-3px}
.data .psearch{margin:7px 4px 9px 4px;padding-left:8px}
.node{display:flex;height:24.300px;align-items:center;padding-left:9px;font-size:12px;color:#484644}
.node svg:first-child{color:#605e5c;margin-right:7px}
.node .tb{margin-bottom:-4px}
.rail{width:33px;flex:none;background:#fafafa;border-left:1px solid #e1dfdd;display:flex;flex-direction:column;align-items:center}
.rail span{width:32px;height:32px;border:1px solid #605e5c;background:#e4e2e0;display:flex;align-items:center;justify-content:center}
.plus{margin-top:7px;margin-right:2px}
.gear{margin-top:auto;width:32px;height:33px;border-top:1px solid #d2d0ce;border-bottom:1px solid #e1dfdd;display:flex;align-items:center;justify-content:center}

.status{height:23px;flex:none;background:#f3f2f1;display:flex;align-items:center;color:#484644;font-size:12px;position:relative}
.pg{margin-left:4px;width:1192px;padding-top:2px}
.zoom{margin-top:1px}
.pct{margin-left:11px;width:42px}
.upd{margin-left:13px;padding-top:2px;letter-spacing:-.27px}

.taskbar{height:41px;flex:none;background:linear-gradient(90deg,#474747 0 75%,#3c3734 86%,#332a27 94%,#343130);border-top:1px solid #000;display:flex;color:#fff}
.start{width:48px;display:flex;align-items:center;justify-content:center}
.tsearch{width:288px;height:40px;background:#f2f2f2;border:1px solid #c9c9c9;color:#222;display:flex;align-items:center;font-size:15.500px;flex:none;letter-spacing:-.35px}
.tsearch svg{margin:0 11px 0 11px}
.apps{display:flex;width:640px;flex:none;gap:9px;padding-left:4px}
.apps span{width:40px;height:40px;display:flex;align-items:center;justify-content:center;flex:none}
.apps .tv{margin-right:2px}
.apps .run{background:linear-gradient(#f590d0,#f590d0) 0 38px/40px 2px no-repeat}
.apps .multi{background:linear-gradient(90deg,#f590d0 31px,#b86c9c 31px) 0 38px/40px 2px no-repeat}
.fbox{width:18px;height:18px;background:#777;color:#222;font:12px/18px "Liberation Sans",sans-serif;text-align:center}
.tray{display:flex;align-items:center;margin-left:285px;font-size:14px}
.badge{font-size:9px;fill:#fff}
.nb{font-size:11px;fill:#fff}
.temp{width:38px;margin-left:7px}
.sunny{width:63px}
.up{transform:rotate(180deg)}
.bat{margin-left:11px}.cam{margin-left:11px}.wifi{margin-left:10px}
.clock{display:flex;flex-direction:column;align-items:center;font-size:12px;line-height:18px;margin-left:6px;width:58px;letter-spacing:-.45px}
.note{margin:6px 0 0 14px}
.edge{width:1px;height:40px;background:#999;margin-left:10px}
```
